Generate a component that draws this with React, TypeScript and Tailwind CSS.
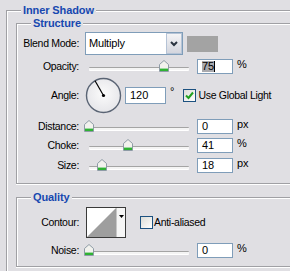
import React from "react";

const font = { fontFamily: '"Liberation Sans", Arial, sans-serif' };

function Thumb() {
  return (
    <svg width="10" height="12" viewBox="0 0 10 12">
      <path d="M5 0.5 L9.5 4.5 V11.5 H0.5 V4.5 Z" fill="#f2f2ee" stroke="#8e9ba6" />
      <rect x="1" y="9" width="8" height="2" fill="#2fb234" />
      <rect x="1" y="8" width="8" height="1" fill="#9fd9a0" />
    </svg>
  );
}

function Slider({ pos }: { pos: number }) {
  return (
    <div className="relative w-[108px] h-[15px] flex items-center">
      <div className="mx-[4px] mt-[3px] w-[100px] h-[3px] rounded-[1px] border-t border-[#a4a4a4] bg-[#f4f4f4] shadow-[0_1px_0_#ffffff]" />
      <div className="absolute top-[1px]" style={{ left: pos - 5 }}>
        <Thumb />
      </div>
    </div>
  );
}

function Input({ value, w = 36, h = 15, selected = false }: { value: string; w?: number; h?: number; selected?: boolean }) {
  return (
    <div
      className="bg-white border border-[#7f9db9] flex items-center pl-[4px] text-[11px] text-black leading-none"
      style={{ width: w, height: h }}
    >
      {selected ? (
        <span className="flex items-center">
          <span className="bg-[#a9a9ad]">{value}</span>
          <span className="w-px h-[11px] bg-black" />
        </span>
      ) : (
        value
      )}
    </div>
  );
}

const txt = "text-[10.5px] leading-none text-black tracking-[-0.3px]";

function Label({ text }: { text: string }) {
  return <div className={"w-[62px] text-right " + txt}>{text}</div>;
}

function SliderRow({ label, pos, value, unit, selected = false }: { label: string; pos: number; value: string; unit: string; selected?: boolean }) {
  return (
    <div className="flex items-center h-[15px]">
      <Label text={label} />
      <div className="ml-[6px]">
        <Slider pos={pos} />
      </div>
      <div className="ml-[4px]">
        <Input value={value} selected={selected} />
      </div>
      <div className="ml-[4px] text-[11px] leading-none text-black -mt-[4px]">{unit}</div>
    </div>
  );
}

function Legend({ text, left }: { text: string; left: number }) {
  return (
    <div
      className="absolute -top-[6px] px-[2px] bg-[#e0dfe3] text-[11px] font-bold leading-none text-[#1748b0] tracking-[-0.1px]"
      style={{ left }}
    >
      {text}
    </div>
  );
}

function Dial() {
  return (
    <svg width="37" height="37" viewBox="0 0 37 37">
      <defs>
        <radialGradient id="dg" cx="50%" cy="45%" r="60%">
          <stop offset="0%" stopColor="#fbfbfb" />
          <stop offset="100%" stopColor="#e4e4e8" />
        </radialGradient>
      </defs>
      <circle cx="18.5" cy="18.5" r="17" fill="url(#dg)" stroke="#5a6474" strokeWidth="1.4" />
      <line x1="18.5" y1="18.5" x2="10" y2="3.8" stroke="#000" strokeWidth="1.2" />
      <circle cx="18.5" cy="18.5" r="1.6" fill="#000" />
    </svg>
  );
}

function CheckBox({ checked }: { checked: boolean }) {
  return (
    <div className="w-[13px] h-[13px] border border-[#1c5180] bg-gradient-to-br from-[#dcdcd7] to-[#ffffff] flex items-center justify-center">
      {checked && (
        <svg width="9" height="9" viewBox="0 0 9 9">
          <path d="M1 4.5 L3.5 7 L8 1.5" fill="none" stroke="#21a121" strokeWidth="2" />
        </svg>
      )}
    </div>
  );
}

export default function App() {
  return (
    <div className="w-[290px] h-[271px] bg-[#e0dfe3] overflow-hidden pt-[10px] pl-[6px]" style={font}>
      {/* Outer group */}
      <div className="relative border-t border-l border-[#a0a0a4] shadow-[inset_1px_1px_0_#ffffff] h-[300px] pt-[12px] pl-[9px]">
        <Legend text="Inner Shadow" left={14} />
        {/* Structure group */}
        <div className="relative border-t border-l border-b border-[#a0a0a4] shadow-[inset_1px_1px_0_#ffffff,0_1px_0_#ffffff] h-[161px]">
          <Legend text="Structure" left={14} />
          <div className="flex flex-col pt-[8px]">
            {/* Blend mode */}
            <div className="flex items-center h-[23px]">
              <Label text="Blend Mode:" />
              <div className="ml-[6px] w-[98px] h-[23px] bg-white border border-[#7f9db9] flex items-center">
                <div className="flex-1 pl-[3px] text-[11px] leading-none text-black tracking-[-0.2px]">Multiply</div>
                <div className="w-[16px] h-[21px] border border-[#b5c3d6] bg-gradient-to-b from-[#f4f4f6] to-[#d4d6de] flex items-center justify-center">
                  <svg width="8" height="6" viewBox="0 0 8 6">
                    <path d="M1 1 L4 4 L7 1" fill="none" stroke="#2a3440" strokeWidth="2" />
                  </svg>
                </div>
              </div>
              <div className="ml-[4px] w-[31px] h-[16px] bg-[#a3a3a3]" />
            </div>
            {/* Opacity */}
            <div className="mt-[4px]">
              <SliderRow label="Opacity:" pos={79} value="75" unit="%" selected />
            </div>
            {/* Angle */}
            <div className="flex items-center h-[37px] mt-[3px]">
              <Label text="Angle:" />
              <div className="ml-[6px]">
                <Dial />
              </div>
              <div className="ml-[3px]">
                <Input value="120" w={41} h={17} />
              </div>
              <div className="ml-[4px] text-[11px] leading-none -mt-[8px]">°</div>
              <div className="ml-[9px]">
                <CheckBox checked />
              </div>
              <div className={"ml-[2px] " + txt}>Use Global Light</div>
            </div>
            <div className="mt-[5px]">
              <SliderRow label="Distance:" pos={4} value="0" unit="px" />
            </div>
            <div className="mt-[4px]">
              <SliderRow label="Choke:" pos={43} value="41" unit="%" />
            </div>
            <div className="mt-[5px]">
              <SliderRow label="Size:" pos={17} value="18" unit="px" />
            </div>
          </div>
        </div>
        {/* Quality group */}
        <div className="relative mt-[13px] border-t border-l border-b border-[#a0a0a4] shadow-[inset_1px_1px_0_#ffffff,0_1px_0_#ffffff] h-[70px]">
          <Legend text="Quality" left={14} />
          <div className="flex flex-col pt-[9px]">
            <div className="flex items-center h-[31px]">
              <Label text="Contour:" />
              <div className="ml-[7px] w-[40px] h-[31px] border border-[#3a3a3a] bg-white flex">
                <svg width="29" height="29" viewBox="0 0 29 29" className="shrink-0">
                  <polygon points="0,29 29,0 29,29" fill="#9e9e9e" />
                </svg>
                <div className="flex-1 border-l border-[#c8c8c8] bg-[#f6f6f6] flex justify-center pt-[7px]">
                  <svg width="5" height="3" viewBox="0 0 5 3">
                    <polygon points="0,0 5,0 2.5,3" fill="#000" />
                  </svg>
                </div>
              </div>
              <div className="ml-[14px]">
                <CheckBox checked={false} />
              </div>
              <div className={"ml-[1px] " + txt}>Anti-aliased</div>
            </div>
            <div className="mt-[5px]">
              <SliderRow label="Noise:" pos={4} value="0" unit="%" />
            </div>
          </div>
        </div>
      </div>
    </div>
  );
}
